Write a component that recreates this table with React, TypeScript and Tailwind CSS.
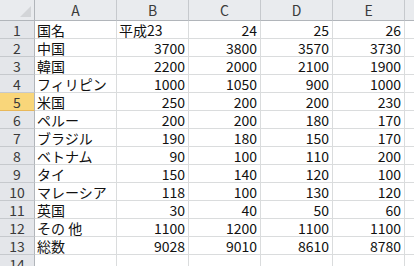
import React from "react";

const cols = ["A", "B", "C", "D", "E"];
const rows: (string | number)[][] = [
  ["国名", "平成23", 24, 25, 26],
  ["中国", 3700, 3800, 3570, 3730],
  ["韓国", 2200, 2000, 2100, 1900],
  ["フィリピン", 1000, 1050, 900, 1000],
  ["米国", 250, 200, 200, 230],
  ["ペルー", 200, 200, 180, 170],
  ["ブラジル", 190, 180, 150, 170],
  ["ベトナム", 90, 100, 110, 200],
  ["タイ", 150, 140, 120, 100],
  ["マレーシア", 118, 100, 130, 120],
  ["英国", 30, 40, 50, 60],
  ["その 他", 1100, 1200, 1100, 1100],
  ["総数", 9028, 9010, 8610, 8780],
  ["", "", "", "", ""],
];

const font = { fontFamily: '"Noto Sans CJK JP", "Liberation Sans", sans-serif' };

export default function App() {
  return (
    <div
      className="w-[414px] h-[266px] overflow-hidden bg-white text-[14px] leading-[16px] text-[#111]"
      style={font}
    >
      <div className="grid grid-cols-[35px_82px_72px_72px_72px_72px_1fr]">
        {/* corner */}
        <div className="h-[21px] bg-[#e9ebee] border-r border-b border-[#b1b5ba] flex items-end justify-end pr-[3px] pb-[3px]">
          <svg width="11" height="11" viewBox="0 0 11 11">
            <polygon points="11,0 11,11 0,11" fill="#d3d5d8" />
          </svg>
        </div>
        {cols.map((c) => (
          <div
            key={c}
            className="h-[21px] bg-[#e9ebee] border-r border-b border-r-[#c6c9cd] border-b-[#b1b5ba] flex items-center justify-center text-[#3a3a3a] text-[14px]"
          >
            {c}
          </div>
        ))}
        <div className="h-[21px] bg-[#e9ebee] border-b border-b-[#b1b5ba]" />
        {rows.map((r, i) => (
          <React.Fragment key={i}>
            <div
              className={
                i === 4
                  ? "h-[18px] bg-[#f9d67a] border-r border-b border-r-[#b1b5ba] border-b-[#e8b85a] flex items-center justify-center text-[#3a3a3a] overflow-hidden"
                  : "h-[18px] bg-[#e4e6ea] border-r border-b border-r-[#b1b5ba] border-b-[#c6c9cd] flex items-center justify-center text-[#3a3a3a] overflow-hidden"
              }
            >
              {i + 1}
            </div>
            {r.map((v, j) => (
              <div
                key={j}
                className={
                  typeof v === "number"
                    ? "h-[18px] border-r border-b border-[#dadcdd] flex items-center justify-end pr-[3px] whitespace-nowrap overflow-hidden"
                    : "h-[18px] border-r border-b border-[#dadcdd] flex items-center pl-[2px] whitespace-nowrap overflow-hidden"
                }
              >
                {v}
              </div>
            ))}
            <div className="h-[18px] border-b border-[#dadcdd]" />
          </React.Fragment>
        ))}
      </div>
    </div>
  );
}
